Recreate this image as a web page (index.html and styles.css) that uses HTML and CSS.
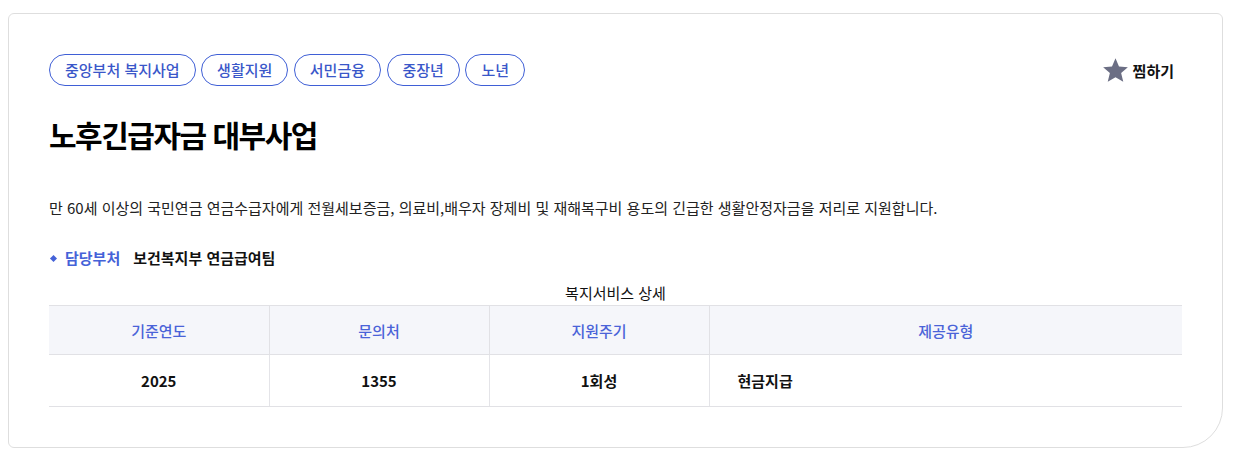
FILE: index.html
```html
<!DOCTYPE html>
<html lang="ko">
<head>
<meta charset="utf-8">
<link rel="stylesheet" href="styles.css">
</head>
<body>
<div class="card">
  <div class="top">
    <ul class="tags">
      <li class="tag">중앙부처 복지사업</li>
      <li class="tag">생활지원</li>
      <li class="tag">서민금융</li>
      <li class="tag">중장년</li>
      <li class="tag">노년</li>
    </ul>
    <button class="fav">
      <svg class="star" width="27" height="27" viewBox="0 0 24 24"><path d="M12 1.2l3.1 7.3 7.9.6-6 5.2 1.9 7.7L12 17.9l-6.9 4.1 1.9-7.7-6-5.2 7.9-.6z" fill="#6b6e84"/></svg>
      <span>찜하기</span>
    </button>
  </div>
  <h1 class="title">노후긴급자금 대부사업</h1>
  <p class="desc">만 60세 이상의 국민연금 연금수급자에게 전월세보증금, 의료비,배우자 장제비 및 재해복구비 용도의 긴급한 생활안정자금을 저리로 지원합니다.</p>
  <div class="dept"><span class="dot"></span><span class="dept-label">담당부처</span><span class="dept-value">보건복지부 연금급여팀</span></div>
  <table class="detail">
    <caption>복지서비스 상세</caption>
    <thead>
      <tr><th class="c1">기준연도</th><th class="c2">문의처</th><th class="c3">지원주기</th><th>제공유형</th></tr>
    </thead>
    <tbody>
      <tr><td>2025</td><td>1355</td><td>1회성</td><td class="left">현금지급</td></tr>
    </tbody>
  </table>
</div>
</body>
</html>
```
FILE: styles.css
```css
* { box-sizing: border-box; }
body {
  margin: 13px 10px 10px 8px;
  background: #fff;
  font-family: "Noto Sans CJK KR", "Noto Sans", sans-serif;
  color: #111;
}
.card {
  width: 1215px;
  height: 435px;
  border: 1px solid #dedede;
  border-radius: 6px 6px 40px 6px;
  padding: 40px 40px 0 40px;
}
.top {
  display: flex;
  justify-content: space-between;
  align-items: center;
}
.tags {
  display: flex;
  gap: 5.5px;
  list-style: none;
  margin: 0;
  padding: 0;
}
.tag {
  height: 32px;
  padding: 0 15px;
  border: 1px solid #3f5fd6;
  border-radius: 16px;
  color: #3a57c9;
  font-size: 15px;
  font-weight: 500;
  line-height: 30px;
}
.fav {
  display: flex;
  align-items: center;
  gap: 4px;
  border: 0;
  background: none;
  padding: 0;
  margin-right: 8px;
  font-family: inherit;
  font-size: 15px;
  font-weight: 700;
  color: #111;
}
.title {
  margin: 29px 0 0;
  font-size: 30px;
  font-weight: 700;
  line-height: 38px;
  letter-spacing: -1.5px;
  color: #000;
}
.desc {
  margin: 44px 0 0;
  font-size: 15px;
  line-height: 22px;
  color: #222;
}
.dept {
  display: flex;
  align-items: center;
  margin-top: 28px;
  font-size: 15px;
  font-weight: 700;
  line-height: 22px;
}
.dot {
  width: 5px;
  height: 5px;
  background: #4562d8;
  transform: rotate(45deg);
  margin: 0 9px 0 2px;
}
.dept-label { color: #4562d8; margin-right: 13px; }
.dept-value { color: #111; }
.detail {
  width: 100%;
  margin-top: 14px;
  border-collapse: collapse;
  font-size: 15px;
}
.detail caption {
  font-size: 15px;
  line-height: 20px;
  padding-bottom: 2px;
  color: #111;
}
.detail th {
  background: #f5f6fa;
  height: 49px;
  color: #4a63d8;
  font-weight: 500;
  border-top: 1px solid #e1e1e5;
  border-bottom: 1px solid #e1e1e5;
  border-left: 1px solid #e1e1e5;
}
.detail th:first-child, .detail td:first-child { border-left: 0; }
.c1, .c2, .c3 { width: 220px; }
.detail td {
  height: 52px;
  text-align: center;
  font-weight: 700;
  color: #111;
  border-bottom: 1px solid #e1e1e5;
  border-left: 1px solid #e4e4e8;
}
.detail td.left {
  text-align: left;
  padding-left: 28px;
}
```
